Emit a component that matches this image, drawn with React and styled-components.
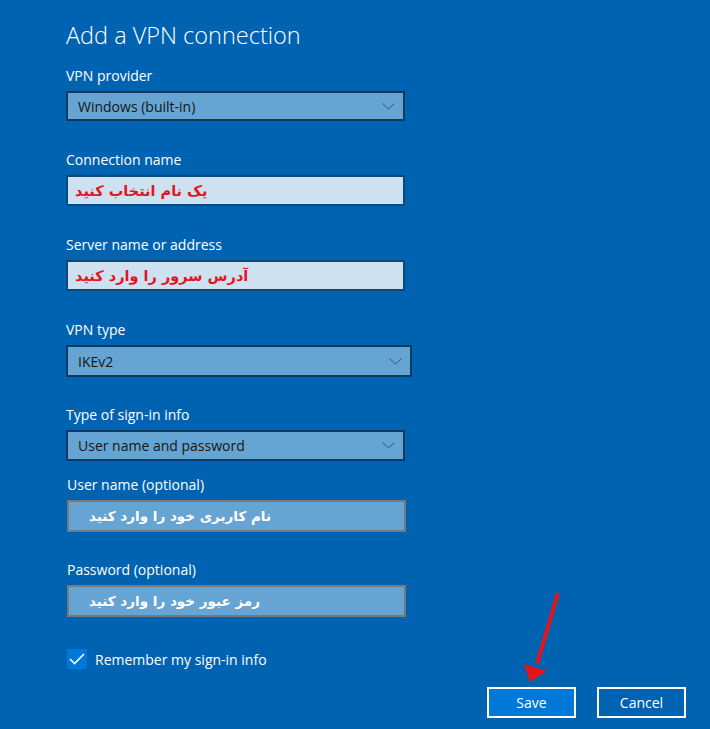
import React from "react";
import styled, { createGlobalStyle } from "styled-components";

const GlobalStyle = createGlobalStyle`
  html, body {
    margin: 0;
    padding: 0;
    background-color: #0063b1;
  }
  body {
    font-family: "Open Sans", "Noto Sans", sans-serif;
    color: white;
  }
`;

const Page = styled.div`
  position: relative;
  width: 710px;
  height: 729px;
  box-sizing: border-box;
  padding: 20px 24px 0 66px;
  display: flex;
  flex-direction: column;
  overflow: hidden;
`;

const Title = styled.h1`
  margin: 0;
  font-size: 23.5px;
  font-weight: 300;
  line-height: 30px;
`;

const Field = styled.div`
  display: flex;
  flex-direction: column;
  gap: 5px;
  margin-top: ${(props) => props.$top}px;
  margin-left: ${(props) => props.$indent || 0}px;
`;

const Label = styled.label`
  font-size: 14px;
  line-height: 20px;
  color: #ffffff;
`;

const Select = styled.div`
  width: ${(props) => props.$width}px;
  height: ${(props) => props.$height || 30}px;
  box-sizing: border-box;
  border: 2px solid #0c3a60;
  background-color: #66a5d3;
  display: flex;
  align-items: center;
  justify-content: space-between;
  padding: 0 8px 0 10px;
  color: #161616;
  font-size: 14px;
`;

const TextBox = styled.div`
  width: ${(props) => props.$width || 339}px;
  height: ${(props) => props.$height || 31}px;
  box-sizing: border-box;
  border: 2px solid ${(props) => props.$border};
  background-color: ${(props) => props.$fill};
  display: flex;
  align-items: center;
  padding-left: ${(props) => props.$pad}px;
`;

const Persian = styled.span`
  font-family: "DejaVu Sans", "Noto Sans", sans-serif;
  font-weight: bold;
  font-size: ${(props) => props.$size || 14}px;
  color: ${(props) => props.$color};
`;

const CheckRow = styled.div`
  display: flex;
  align-items: center;
  gap: 8px;
  margin-top: 32px;
  margin-left: 1px;
  font-size: 14px;
`;

const CheckBox = styled.div`
  width: 20px;
  height: 20px;
  background-color: #0078d7;
  display: flex;
  align-items: center;
  justify-content: center;
`;

const Buttons = styled.div`
  display: flex;
  justify-content: flex-end;
  gap: 21px;
  margin-top: 18px;
`;

const Button = styled.button`
  width: 89px;
  height: 31px;
  box-sizing: border-box;
  border: 2px solid #ffffff;
  background-color: ${(props) => props.$fill};
  color: #ffffff;
  font-family: "Open Sans", "Noto Sans", sans-serif;
  font-size: 14px;
  padding: 0;
`;

const Arrow = styled.svg`
  position: absolute;
  left: 0;
  top: 0;
  pointer-events: none;
`;

const Chevron = () => (
  <svg width="13" height="7" viewBox="0 0 13 7">
    <polyline points="0.5,0.5 6.5,6 12.5,0.5" fill="none" stroke="#34536f" strokeWidth="1" />
  </svg>
);

const App = () => (
  <Page>
    <GlobalStyle />
    <Title>Add a VPN connection</Title>

    <Field $top={16}>
      <Label>VPN provider</Label>
      <Select $width={339}>
        Windows (built-in)
        <Chevron />
      </Select>
    </Field>

    <Field $top={29}>
      <Label>Connection name</Label>
      <TextBox $border="#0c4a7c" $fill="#cde1f0" $pad={7}>
        <Persian dir="rtl" $color="#e3141b" $size={14.5}>یک نام  انتخاب کنید</Persian>
      </TextBox>
    </Field>

    <Field $top={29}>
      <Label>Server name or address</Label>
      <TextBox $border="#0c4a7c" $fill="#cde1f0" $pad={7}>
        <Persian dir="rtl" $color="#e3141b" $size={14.5}>آدرس  سرور را وارد کنید</Persian>
      </TextBox>
    </Field>

    <Field $top={29}>
      <Label>VPN type</Label>
      <Select $width={346} $height={32}>
        IKEv2
        <Chevron />
      </Select>
    </Field>

    <Field $top={28}>
      <Label>Type of sign-in info</Label>
      <Select $width={339} $height={31}>
        User name and password
        <Chevron />
      </Select>
    </Field>

    <Field $top={14} $indent={1}>
      <Label>User name (optional)</Label>
      <TextBox $border="#787878" $fill="#66a5d3" $pad={20} $height={32}>
        <Persian dir="rtl" $color="#ffffff" $size={13.5}>نام کاربری خود را وارد کنید</Persian>
      </TextBox>
    </Field>

    <Field $top={28} $indent={1}>
      <Label>Password (optional)</Label>
      <TextBox $border="#787878" $fill="#66a5d3" $pad={20} $height={32}>
        <Persian dir="rtl" $color="#ffffff" $size={13.5}>رمز عبور خود را وارد کنید</Persian>
      </TextBox>
    </Field>

    <CheckRow>
      <CheckBox>
        <svg width="16" height="12" viewBox="0 0 16 12">
          <polyline points="1,6 5.5,10.5 15,1" fill="none" stroke="#ffffff" strokeWidth="1.6" />
        </svg>
      </CheckBox>
      Remember my sign-in info
    </CheckRow>

    <Buttons>
      <Button $fill="#0078d7">Save</Button>
      <Button $fill="transparent">Cancel</Button>
    </Buttons>

    <Arrow width="710" height="729">
      <line x1="558" y1="593" x2="537" y2="664" stroke="#e3141b" strokeWidth="4" />
      <polygon points="524,664 547,671 530,682" fill="#e3141b" />
    </Arrow>
  </Page>
);

export default App;
